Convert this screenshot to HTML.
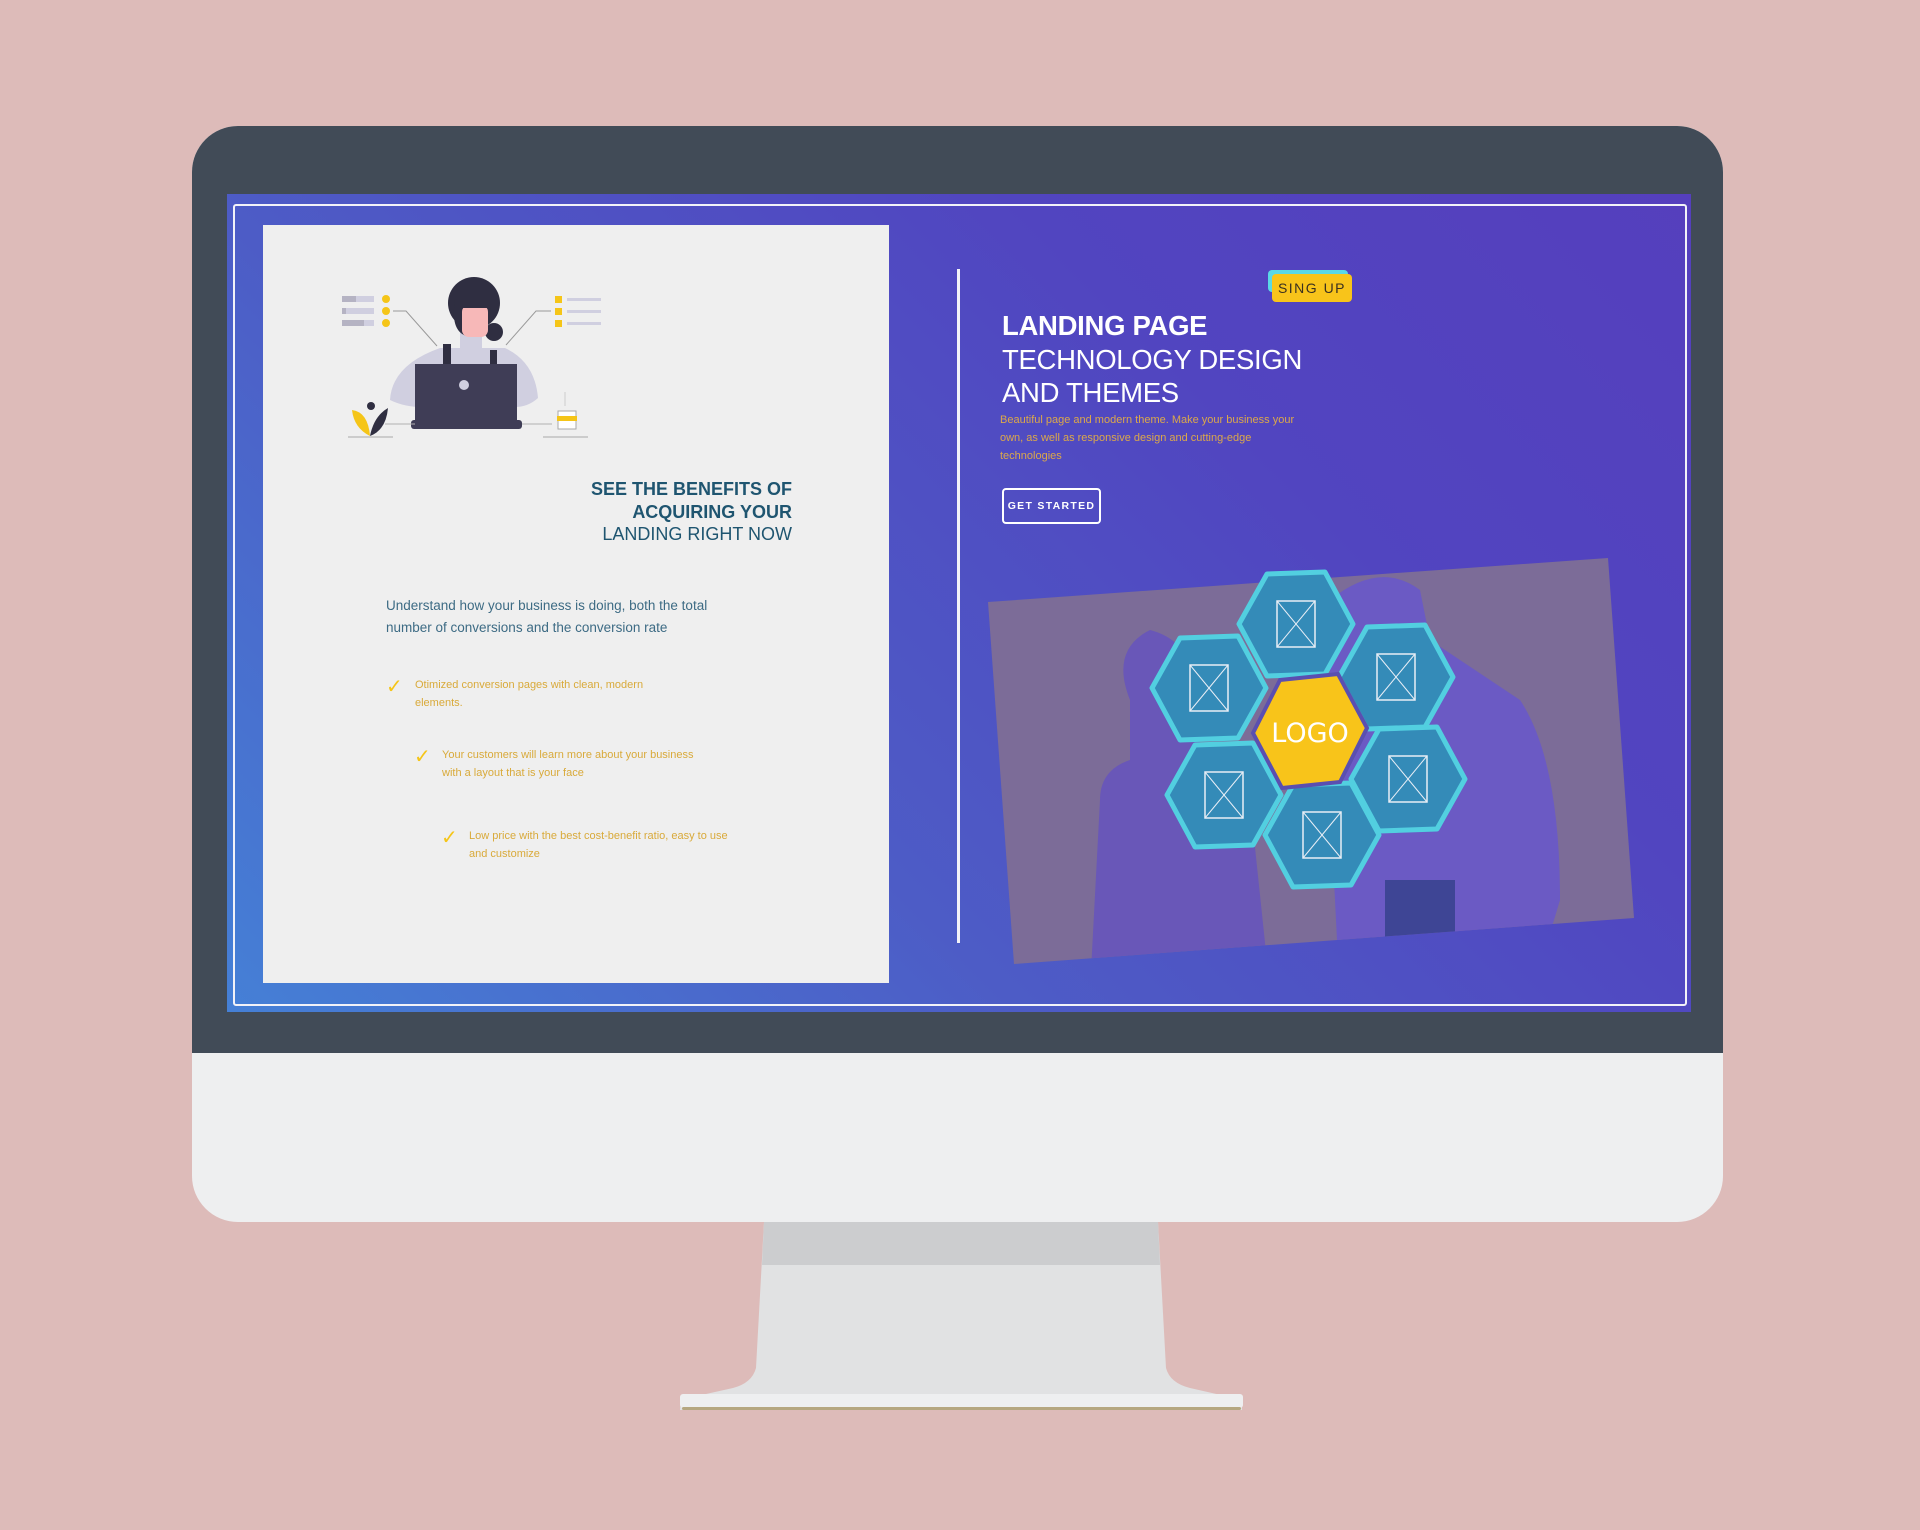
<!DOCTYPE html>
<html><head><meta charset="utf-8"><style>
*{margin:0;padding:0;box-sizing:border-box}
body{width:1920px;height:1530px;background:#ddbbb9;position:relative;overflow:hidden;font-family:"Liberation Sans",sans-serif}
.abs{position:absolute}
</style></head><body>
<!-- stand -->
<svg class="abs" style="left:0;top:0" width="1920" height="1530">
<path d="M764 1222 L1158 1222 L1166 1368 Q1170 1383 1190 1388 L1234 1398 Q1242 1402 1242 1410 L680 1410 Q680 1402 688 1398 L733 1388 Q752 1383 756 1368 Z" fill="#e1e2e3"/>
<path d="M764 1222 L1158 1222 L1160 1265 L762 1265 Z" fill="#cccdcf"/>
<rect x="680" y="1394" width="563" height="14" rx="3" fill="#eeeff0"/>
<rect x="682" y="1407" width="559" height="3" rx="1.5" fill="#b5a780"/>
</svg>
<!-- monitor -->
<div class="abs" style="left:192px;top:126px;width:1531px;height:1096px;border-radius:46px;background:#eeeff0;overflow:hidden">
 <div class="abs" style="left:0;top:0;width:1531px;height:927px;background:#414b57"></div>
</div>
<!-- screen -->
<div class="abs" style="left:227px;top:194px;width:1464px;height:818px;background:linear-gradient(45deg,#4580d6 0%,#4d5cc6 35%,#5145c0 70%,#553fbd 100%)"></div>
<div class="abs" style="left:233px;top:204px;width:1454px;height:802px;border:2px solid #f2f2f8;border-radius:3px"></div>
<!-- left card -->
<div class="abs" style="left:263px;top:225px;width:626px;height:758px;background:#efefef"></div>
<svg class="abs" style="left:0;top:0" width="1920" height="1530">
 <rect x="342" y="296" width="32" height="6" fill="#d0cfe0"/><rect x="342" y="296" width="14" height="6" fill="#b5b3c3"/>
 <rect x="342" y="308" width="32" height="6" fill="#d0cfe0"/><rect x="342" y="308" width="4" height="6" fill="#b5b3c3"/>
 <rect x="342" y="320" width="32" height="6" fill="#d0cfe0"/><rect x="342" y="320" width="22" height="6" fill="#b5b3c3"/>
 <circle cx="386" cy="299" r="4" fill="#f5c518"/><circle cx="386" cy="311" r="4" fill="#f5c518"/><circle cx="386" cy="323" r="4" fill="#f5c518"/>
 <polyline points="393,311 406,311 437,346" fill="none" stroke="#9a9a9a" stroke-width="1"/>
 <rect x="555" y="296" width="7" height="7" fill="#f5c518"/><rect x="555" y="308" width="7" height="7" fill="#f5c518"/><rect x="555" y="320" width="7" height="7" fill="#f5c518"/>
 <rect x="567" y="298" width="34" height="3" fill="#d0cfe0"/><rect x="567" y="310" width="34" height="3" fill="#d0cfe0"/><rect x="567" y="322" width="34" height="3" fill="#d0cfe0"/>
 <polyline points="551,311 536,311 506,345" fill="none" stroke="#9a9a9a" stroke-width="1"/>
 <!-- woman -->
 <path d="M390 400 Q392 365 440 348 L505 348 Q535 362 538 398 Q525 410 505 406 L440 406 Q410 410 390 400Z" fill="#d0cfe0"/>
 <rect x="460" y="330" width="22" height="25" fill="#d0cfe0"/>
 <circle cx="474" cy="303" r="26" fill="#2f2e41"/>
 <path d="M455 300 Q450 330 466 336 L483 336 Q492 322 490 300Z" fill="#2f2e41"/>
 <circle cx="494" cy="332" r="9" fill="#2f2e41"/>
 <rect x="462" y="305" width="26" height="32" rx="7" fill="#f7b8b8"/>
 <rect x="458" y="296" width="34" height="12" fill="#2f2e41"/>
 <rect x="443" y="344" width="8" height="26" fill="#2f2e41"/><rect x="490" y="350" width="7" height="20" fill="#2f2e41"/>
 <rect x="415" y="364" width="102" height="60" fill="#3f3d56"/>
 <rect x="411" y="420" width="111" height="9" rx="3" fill="#3f3d56"/>
 <circle cx="464" cy="385" r="5" fill="#d0cfe0"/>
 <line x1="385" y1="424" x2="415" y2="424" stroke="#b0b0b0"/><line x1="522" y1="424" x2="552" y2="424" stroke="#b0b0b0"/>
 <path d="M352 410 Q368 412 370 436 Q354 428 352 410Z" fill="#f5c518"/>
 <path d="M388 408 Q386 430 370 436 Q374 416 388 408Z" fill="#2f2e41"/>
 <circle cx="371" cy="406" r="4" fill="#2f2e41"/>
 <line x1="348" y1="437" x2="393" y2="437" stroke="#aaa"/>
 <rect x="558" y="411" width="18" height="18" fill="#fff" stroke="#aaa"/><rect x="557" y="416" width="20" height="5" fill="#f5c518"/>
 <line x1="565" y1="392" x2="565" y2="406" stroke="#ccc"/>
 <line x1="543" y1="437" x2="588" y2="437" stroke="#aaa"/>
</svg>
<div class="abs" style="left:500px;top:478px;width:292px;text-align:right;color:#1f5570;font-size:18px;line-height:22.5px">
<b>SEE THE BENEFITS OF<br>ACQUIRING YOUR</b><br>LANDING RIGHT NOW</div>
<div class="abs" style="left:386px;top:595px;width:360px;color:#3d6b84;font-size:13.5px;line-height:21.5px">Understand how your business is doing, both the total number of conversions and the conversion rate</div>
<div class="abs" style="left:386px;top:674px;color:#f5c518;font-size:20px">✓</div>
<div class="abs" style="left:415px;top:677px;width:260px;color:#d9aa3a;font-size:11px;line-height:17.5px">Otimized conversion pages with clean, modern elements.</div>
<div class="abs" style="left:414px;top:744px;color:#f5c518;font-size:20px">✓</div>
<div class="abs" style="left:442px;top:747px;width:255px;color:#d9aa3a;font-size:11px;line-height:17.5px">Your customers will learn more about your business with a layout that is your face</div>
<div class="abs" style="left:441px;top:825px;color:#f5c518;font-size:20px">✓</div>
<div class="abs" style="left:469px;top:828px;width:280px;color:#d9aa3a;font-size:11px;line-height:17.5px">Low price with the best cost-benefit ratio, easy to use and customize</div>
<!-- right side -->
<div class="abs" style="left:957px;top:269px;width:3px;height:674px;background:#f2f2f8"></div>
<div class="abs" style="left:1268px;top:270px;width:80px;height:22px;background:#5ad8e6;border-radius:4px"></div>
<div class="abs" style="left:1272px;top:274px;width:80px;height:28px;background:#f8c41a;border-radius:4px;color:#3a3020;font-size:14px;letter-spacing:1.5px;line-height:28px;text-align:center">SING UP</div>
<div class="abs" style="left:1002px;top:309px;color:#fff;font-size:27.5px;line-height:33.5px;letter-spacing:-0.3px"><b>LANDING PAGE</b><br>TECHNOLOGY DESIGN<br>AND THEMES</div>
<div class="abs" style="left:1000px;top:411px;width:300px;color:#dca84a;font-size:11px;line-height:18px">Beautiful page and modern theme. Make your business your own, as well as responsive design and cutting-edge technologies</div>
<div class="abs" style="left:1002px;top:488px;width:99px;height:36px;border:2px solid #fff;border-radius:4px;color:#fff;font-size:10.5px;font-weight:bold;letter-spacing:1.3px;line-height:32px;text-align:center">GET STARTED</div>
<svg class="abs" style="left:0;top:0" width="1920" height="1530">
 <defs><clipPath id="ph"><polygon points="988,602 1608,558 1634,918 1014,964"/></clipPath>
 <g id="x"><rect x="-19" y="-23" width="38" height="46" fill="none" stroke="#e8eef6" stroke-width="1.5"/><path d="M-19 -23 L19 23 M19 -23 L-19 23" stroke="#e8eef6" stroke-width="1"/></g>
 <polygon id="hx" points="-57,0 -29,-50 29,-52 57,0 29,50 -29,52" /></defs>
 <polygon points="988,602 1608,558 1634,918 1014,964" fill="#7c6c98"/>
 <g clip-path="url(#ph)">
  <path d="M1130 700 Q1110 650 1150 630 Q1190 640 1200 690 L1200 760 L1250 800 L1270 990 L1090 990 L1100 800 Q1100 770 1130 760Z" fill="#6957b8"/>
  <path d="M1330 600 Q1380 560 1420 590 L1430 640 L1520 700 Q1560 760 1560 900 L1530 1000 L1340 1000 L1330 800Z" fill="#6b5ac4"/>
  <rect x="1385" y="880" width="70" height="90" fill="#3e4595"/>
 </g>
 <g fill="#348bb8" stroke="#52cfe0" stroke-width="5" stroke-linejoin="round">
  <use href="#hx" x="1296" y="624"/><use href="#hx" x="1209" y="688"/><use href="#hx" x="1396" y="677"/>
  <use href="#hx" x="1408" y="779"/><use href="#hx" x="1224" y="795"/><use href="#hx" x="1322" y="835"/>
 </g>
 <polygon points="1253,733 1280,680 1338,674 1367,728 1340,782 1282,788" fill="#f8c41a" stroke="#5a4fb0" stroke-width="4"/>
 <use href="#x" x="1296" y="624"/><use href="#x" x="1209" y="688"/><use href="#x" x="1396" y="677"/>
 <use href="#x" x="1408" y="779"/><use href="#x" x="1224" y="795"/><use href="#x" x="1322" y="835"/>
 <text x="1310" y="742" text-anchor="middle" fill="#fff" font-family="DejaVu Sans, sans-serif" font-size="27">LOGO</text>
</svg>
</body></html>
